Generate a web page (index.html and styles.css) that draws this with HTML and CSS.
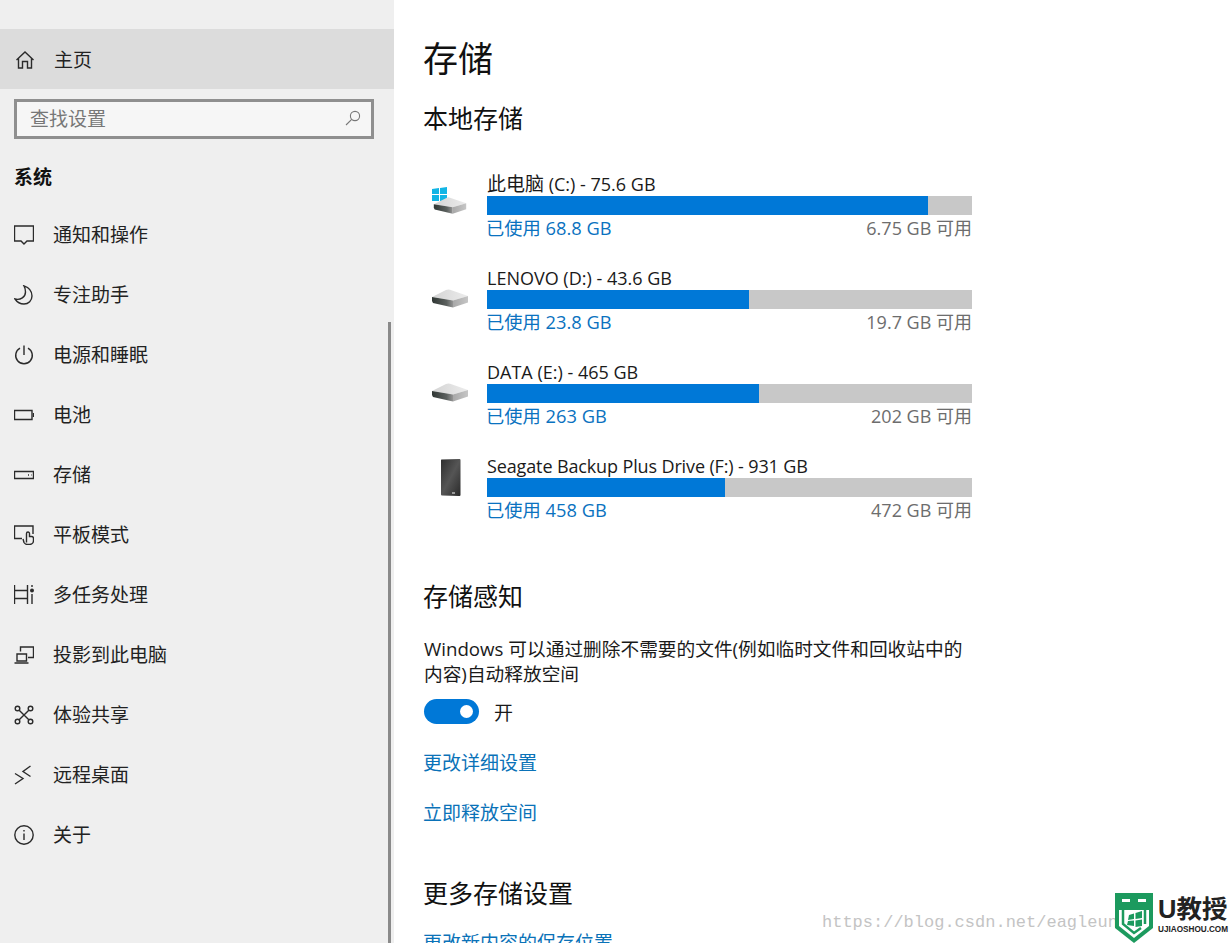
FILE: index.html
```html
<!DOCTYPE html>
<html lang="zh-CN">
<head>
    <meta charset="UTF-8">
    <meta name="viewport" content="width=device-width, initial-scale=1.0">
    <title>存储</title>
    <link rel="stylesheet" href="styles.css">
</head>
<body>
    <svg class="defs" width="0" height="0">
        <defs>
            <linearGradient id="diskTop" x1="0" y1="0" x2="1" y2="0">
                <stop offset="0" stop-color="#d4d4d4"/>
                <stop offset="1" stop-color="#ececec"/>
            </linearGradient>
            <linearGradient id="diskFront" x1="0" y1="0" x2="1" y2="0">
                <stop offset="0" stop-color="#2f3633"/>
                <stop offset="0.7" stop-color="#5c615f"/>
                <stop offset="1" stop-color="#959595"/>
            </linearGradient>
            <linearGradient id="diskSide" x1="0" y1="0" x2="1" y2="0">
                <stop offset="0" stop-color="#a8a8a8"/>
                <stop offset="1" stop-color="#c6c6c6"/>
            </linearGradient>
            <linearGradient id="seagate" x1="0" y1="0" x2="1" y2="1">
                <stop offset="0" stop-color="#2e2e2e"/>
                <stop offset="0.5" stop-color="#555"/>
                <stop offset="1" stop-color="#2a2a2a"/>
            </linearGradient>
            <symbol id="disk" viewBox="0 0 36 20">
                <path d="M0 8 L14 1 Q16 0 18 .7 L36 7 L21 11.5 Z" fill="url(#diskTop)"/>
                <path d="M0 8 L21 11.5 V18.5 L1 14 L0 12 Z" fill="url(#diskFront)"/>
                <path d="M21 11.5 L36 7 V13.5 L21 18.5 Z" fill="url(#diskSide)"/>
            </symbol>
        </defs>
    </svg>

    <aside class="sidebar">
        <a class="nav-item home">
            <svg class="nav-icon" viewBox="0 0 20 20"><path d="M1.5 10 L10 2 L18.5 10 M3.5 8.5 V18 H7.5 V11.5 H12.5 V18 H16.5 V8.5"/></svg>
            <span>主页</span>
        </a>
        <div class="search">
            <span class="search-text">查找设置</span>
            <svg class="search-icon" viewBox="0 0 16 16"><circle cx="10" cy="6" r="4.6"/><path d="M6.7 9.3 L1 15"/></svg>
        </div>
        <h3 class="group-title">系统</h3>
        <nav>
            <a class="nav-item">
                <svg class="nav-icon" viewBox="0 0 20 20"><path d="M.5 1 H19.5 V16 H13 L10 19 L7 16 H.5 Z"/></svg>
                <span>通知和操作</span>
            </a>
            <a class="nav-item">
                <svg class="nav-icon" viewBox="0 0 20 20"><path d="M10 .8 C15 2.5 18 6 18 11 C18 15.5 14.5 19 10 19 C6.5 19 3 17 1 14 C6.5 15.5 11.5 12 11.5 7 C11.5 4.5 11 2.5 10 .8 Z"/></svg>
                <span>专注助手</span>
            </a>
            <a class="nav-item">
                <svg class="nav-icon" viewBox="0 0 20 20"><path d="M6 3.2 A8.3 8.3 0 1 0 14 3.2 M10 .5 V10"/></svg>
                <span>电源和睡眠</span>
            </a>
            <a class="nav-item">
                <svg class="nav-icon" viewBox="0 0 20 20"><path d="M.5 5.5 H18 V14.5 H.5 Z"/><path d="M19.5 8 V12" /></svg>
                <span>电池</span>
            </a>
            <a class="nav-item">
                <svg class="nav-icon" viewBox="0 0 20 20"><path d="M.5 6.5 H19.5 V13.5 H.5 Z M14 10 H15 M17 10 H17.5"/></svg>
                <span>存储</span>
            </a>
            <a class="nav-item">
                <svg class="nav-icon" viewBox="0 0 20 20"><path d="M8 13.5 H.5 V1 H19 V9 M12.5 17.5 V8.5 A1.5 1.5 0 0 1 15.5 8.5 V11.5 H17.5 A2 2 0 0 1 19.5 13.5 V15.5 A4 4 0 0 1 15.5 19.5 H13.5 A4 4 0 0 1 10 17.5 L9 14"/></svg>
                <span>平板模式</span>
            </a>
            <a class="nav-item">
                <svg class="nav-icon" viewBox="0 0 20 20"><path d="M.5 0 V19 M13.5 0 V19 M.5 5.5 H13.5 M.5 13.5 H13.5 M18 9 V19 M18 0 V2"/><circle class="dot" cx="18" cy="5.5" r="2"/></svg>
                <span>多任务处理</span>
            </a>
            <a class="nav-item">
                <svg class="nav-icon" viewBox="0 0 20 20"><path d="M6.5 6.5 V2 H19.5 V12.5 H14 M3 9 H12.5 V16 H3 Z M.5 18 H14.5"/></svg>
                <span>投影到此电脑</span>
            </a>
            <a class="nav-item">
                <svg class="nav-icon" viewBox="0 0 20 20"><circle cx="3.5" cy="3.5" r="2.3"/><circle cx="16.5" cy="3.5" r="2.3"/><circle cx="3.5" cy="16.5" r="2.3"/><circle cx="16.5" cy="16.5" r="2.3"/><path d="M5.2 5.2 L14.8 14.8 M14.8 5.2 L5.2 14.8"/></svg>
                <span>体验共享</span>
            </a>
            <a class="nav-item">
                <svg class="nav-icon" viewBox="0 0 20 20"><path d="M1 8.5 L9 13.5 L1 19 M16.5 1 L9 6.5 L16.5 11.5"/></svg>
                <span>远程桌面</span>
            </a>
            <a class="nav-item">
                <svg class="nav-icon" viewBox="0 0 20 20"><circle cx="10" cy="10" r="9.2"/><path d="M10 8.5 V15 M10 5 V6.5"/></svg>
                <span>关于</span>
            </a>
        </nav>
        <div class="scroll-thumb"></div>
    </aside>

    <main class="content">
        <h1>存储</h1>
        <h2 class="section-title">本地存储</h2>

        <div class="drives">
            <div class="drive">
                <svg class="drive-icon" viewBox="0 0 36 32">
                    <path class="win" d="M0 6 L7 5 V11 H0 Z M8 5 L15 4 V11 H8 Z M0 12 H7 V18 H0 Z M8 12 H15 V18 H8 Z"/>
                    <use href="#disk" x="0" y="14" width="36" height="18"/>
                </svg>
                <div class="drive-info">
                    <div class="drive-name"><span class="cjk">此电脑</span> (C:) - 75.6 GB</div>
                    <div class="bar"><div class="bar-used" style="width: 441px"></div></div>
                    <div class="drive-stats"><span class="used">已使用 68.8 GB</span><span class="free">6.75 GB 可用</span></div>
                </div>
            </div>
            <div class="drive">
                <svg class="drive-icon" viewBox="0 0 36 32"><use href="#disk" x="0" y="12" width="36" height="20"/></svg>
                <div class="drive-info">
                    <div class="drive-name">LENOVO (D:) - 43.6 GB</div>
                    <div class="bar"><div class="bar-used" style="width: 262px"></div></div>
                    <div class="drive-stats"><span class="used">已使用 23.8 GB</span><span class="free">19.7 GB 可用</span></div>
                </div>
            </div>
            <div class="drive">
                <svg class="drive-icon" viewBox="0 0 36 32"><use href="#disk" x="0" y="12" width="36" height="20"/></svg>
                <div class="drive-info">
                    <div class="drive-name">DATA (E:) - 465 GB</div>
                    <div class="bar"><div class="bar-used" style="width: 272px"></div></div>
                    <div class="drive-stats"><span class="used">已使用 263 GB</span><span class="free">202 GB 可用</span></div>
                </div>
            </div>
            <div class="drive">
                <svg class="drive-icon" viewBox="0 0 36 44">
                    <path d="M9.5 .5 L27.5 0 Q28.5 0 28.5 1 V36 Q28.5 37 27.5 37 L10 36.5 Q9 36.5 9 35.5 V1 Q9 .5 9.5 .5 Z" fill="url(#seagate)"/>
                    <rect x="20" y="33" width="3" height="2" fill="#9a9a9a"/>
                </svg>
                <div class="drive-info">
                    <div class="drive-name tight">Seagate Backup Plus Drive (F:) - 931 GB</div>
                    <div class="bar"><div class="bar-used" style="width: 238px"></div></div>
                    <div class="drive-stats"><span class="used">已使用 458 GB</span><span class="free">472 GB 可用</span></div>
                </div>
            </div>
        </div>

        <h2 class="section-title sense-title">存储感知</h2>
        <p class="desc">Windows 可以通过删除不需要的文件(例如临时文件和回收站中的内容)自动释放空间</p>
        <div class="toggle-row">
            <div class="toggle"><div class="knob"></div></div>
            <span>开</span>
        </div>
        <a class="link first-link">更改详细设置</a>
        <a class="link second-link">立即释放空间</a>

        <h2 class="section-title more-title">更多存储设置</h2>
        <a class="link last-link">更改新内容的保存位置</a>
    </main>

    <div class="watermark">https://blog.csdn.net/eagleun</div>
    <div class="brand">
        <svg class="brand-shield" viewBox="0 0 38 50">
            <path d="M0 0 H38 V35 L19 50 L0 35 Z" fill="#1c9a5e"/>
            <path d="M4 17 H34 V33 L19 45 L4 33 Z" fill="#fff"/>
            <rect x="7" y="6" width="8" height="3" fill="#fff"/>
            <rect x="23" y="6" width="8" height="3" fill="#fff"/>
            <path d="M8 16 V31 L19 40 L26 35 M30 16 V31" fill="none" stroke="#1c9a5e" stroke-width="2.5"/>
            <path d="M14 22 L19 20.5 V26 L13 27 Z M20.5 20 L27 18 V25 L20.5 26 Z M13 28 L19 27.5 V33 L12 32 Z M20.5 27.5 L27 26.5 V33 L20.5 34 Z" fill="#1c9a5e"/>
        </svg>
        <div class="brand-text">
            <div class="brand-name">U教授</div>
            <div class="brand-url">UJIAOSHOU.COM</div>
        </div>
    </div>
</body>
</html>
```

FILE: styles.css
```css
* {
    margin: 0;
    padding: 0;
    box-sizing: border-box;
}
html, body {
    height: 100%;
    overflow: hidden;
}
body {
    font-family: "Open Sans", "Noto Sans CJK SC", sans-serif;
    font-size: 19px;
    color: #1a1a1a;
    background-color: #fff;
    display: flex;
    position: relative;
}
.defs {
    position: absolute;
}
.sidebar {
    position: relative;
    flex: 0 0 394px;
    padding-top: 29px;
    background-color: #efefef;
}
.nav-item {
    display: flex;
    align-items: center;
    gap: 19px;
    height: 60px;
    padding: 2px 0 0 14px;
    line-height: 26px;
    color: #222;
}
.nav-item.home {
    background-color: #dcdcdc;
    padding-left: 15px;
}
.nav-icon {
    width: 20px;
    height: 20px;
    fill: none;
    stroke: #2b2b2b;
    stroke-width: 1.4;
    flex-shrink: 0;
}
.nav-icon .dot {
    fill: #2b2b2b;
    stroke: none;
}
.search {
    display: flex;
    align-items: center;
    justify-content: space-between;
    height: 40px;
    margin: 10px 20px 0 14px;
    padding: 0 10px 2px 13px;
    border: 3px solid #8f8f8f;
    background-color: #f6f6f6;
    color: #777;
}
.search-icon {
    width: 16px;
    height: 16px;
    fill: none;
    stroke: #777;
    stroke-width: 1.1;
}
.group-title {
    margin: 24px 0 13px 14px;
    height: 28px;
    font-size: 19px;
    line-height: 28px;
    font-weight: 700;
    color: #111;
}
.scroll-thumb {
    position: absolute;
    top: 322px;
    right: 3px;
    bottom: 0;
    width: 3px;
    background-color: #8a8a8a;
}
.content {
    flex: 1;
    padding: 34px 0 0 30px;
}
h1 {
    margin-left: -1px;
    font-size: 35px;
    line-height: 50px;
    font-weight: 400;
    color: #111;
}
.section-title {
    margin: 17px 0 0 -1px;
    font-size: 25px;
    line-height: 34px;
    font-weight: 400;
    color: #111;
}
.drives {
    display: flex;
    flex-direction: column;
    gap: 25px;
    margin-top: 37px;
}
.drive {
    display: flex;
    width: 548px;
}
.drive-icon {
    flex: 0 0 36px;
    width: 36px;
    height: 44px;
    margin: 5px 19px 0 8px;
}
.win {
    fill: #12b5e5;
}
.drive-info {
    width: 485px;
}
.drive-name {
    height: 24px;
    font-size: 18px;
    line-height: 24px;
    white-space: nowrap;
    color: #1a1a1a;
}
.drive-name .cjk {
    font-size: 19px;
}
.drive-name.tight {
    letter-spacing: -0.13px;
}
.bar {
    height: 19px;
    background-color: #c8c8c8;
}
.bar-used {
    height: 100%;
    background-color: #0078d7;
}
.drive-stats {
    display: flex;
    justify-content: space-between;
    height: 26px;
    font-size: 18px;
    line-height: 26px;
}
.used {
    margin-left: -1px;
    font-size: 18.3px;
    color: #0a72c0;
}
.free {
    color: #6d6d6d;
}
.sense-title {
    margin-top: 56px;
}
.desc {
    width: 545px;
    margin-top: 23px;
    font-size: 18.7px;
    line-height: 25px;
}
.toggle-row {
    display: flex;
    align-items: center;
    gap: 15px;
    margin-top: 13px;
    height: 25px;
}
.toggle {
    display: flex;
    align-items: center;
    justify-content: flex-end;
    width: 55px;
    height: 25px;
    padding-right: 6px;
    border-radius: 13px;
    background-color: #0078d7;
}
.knob {
    width: 13px;
    height: 13px;
    border-radius: 50%;
    background-color: #fff;
}
.link {
    display: block;
    height: 26px;
    margin-left: -1px;
    line-height: 26px;
    color: #0a72b8;
}
.first-link {
    margin-top: 26px;
}
.second-link {
    margin-top: 24px;
}
.more-title {
    margin-top: 50px;
}
.last-link {
    margin-top: 20px;
}
.watermark {
    position: absolute;
    left: 822px;
    top: 912px;
    font-family: "Liberation Mono", monospace;
    font-size: 17px;
    line-height: 22px;
    color: #c4c4c4;
    white-space: nowrap;
}
.brand {
    position: absolute;
    left: 1115px;
    top: 893px;
    display: flex;
    gap: 5px;
}
.brand-shield {
    width: 38px;
    height: 50px;
}
.brand-text {
    font-family: "Liberation Sans", "Noto Sans CJK SC", sans-serif;
    font-weight: 700;
    color: #222;
    white-space: nowrap;
}
.brand-name {
    font-size: 25.5px;
    line-height: 32px;
}
.brand-url {
    font-size: 8.2px;
    line-height: 9px;
}
```
